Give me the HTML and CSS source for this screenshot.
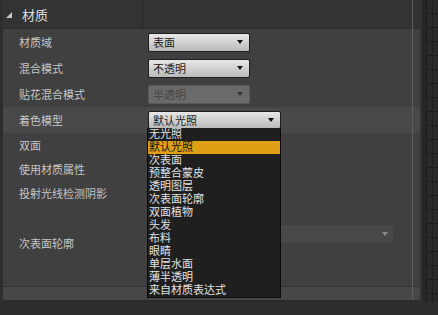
FILE: index.html
```html
<!DOCTYPE html>
<html lang="zh">
<head>
    <meta charset="UTF-8">
    <meta name="viewport" content="width=device-width, initial-scale=1.0">
    <title>材质</title>
    <link rel="stylesheet" href="styles.css">
</head>
<body>
<div class="editor">
    <div class="panel">
        <div class="header">
            <div class="header-title"><span class="expander"></span>材质</div>
            <div class="header-value"></div>
        </div>
        <div class="rows">
            <div class="row">
                <div class="label">材质域</div>
                <div class="value"><div class="combo">表面<span class="arrow"></span></div></div>
            </div>
            <div class="row">
                <div class="label">混合模式</div>
                <div class="value"><div class="combo">不透明<span class="arrow"></span></div></div>
            </div>
            <div class="row">
                <div class="label">贴花混合模式</div>
                <div class="value"><div class="combo disabled">半透明<span class="arrow"></span></div></div>
            </div>
            <div class="row selected">
                <div class="label">着色模型</div>
                <div class="value">
                    <div class="combo wide open">默认光照<span class="arrow"></span>
                        <ul class="menu">
                            <li>无光照</li>
                            <li class="active">默认光照</li>
                            <li>次表面</li>
                            <li>预整合蒙皮</li>
                            <li>透明图层</li>
                            <li>次表面轮廓</li>
                            <li>双面植物</li>
                            <li>头发</li>
                            <li>布料</li>
                            <li>眼睛</li>
                            <li>单层水面</li>
                            <li>薄半透明</li>
                            <li>来自材质表达式</li>
                        </ul>
                    </div>
                </div>
            </div>
            <div class="row short">
                <div class="label">双面</div>
                <div class="value"></div>
            </div>
            <div class="row short">
                <div class="label">使用材质属性</div>
                <div class="value"></div>
            </div>
            <div class="row short">
                <div class="label">投射光线检测阴影</div>
                <div class="value"></div>
            </div>
            <div class="row tall">
                <div class="label">次表面轮廓</div>
                <div class="value"><div class="asset-combo"><span class="arrow"></span></div></div>
            </div>
        </div>
        <div class="footer"></div>
    </div>
    <div class="side">
        <div class="side-gap"></div>
        <div class="side-bar"></div>
        <div class="side-grid"></div>
    </div>
</div>
</body>
</html>
```

FILE: styles.css
```css
body {
    margin: 0;
    width: 438px;
    height: 315px;
    overflow: hidden;
    background-color: #2e2e2e;
    font-family: "Liberation Sans", "Noto Sans CJK SC", sans-serif;
}
.editor {
    display: flex;
    height: 302px;
}
.panel {
    position: relative;
    margin-left: 3px;
    width: 417px;
    background-color: #404040;
    border-radius: 0 0 3px 3px;
}
/* thin scroll guide over the rows */
.panel::after {
    content: "";
    position: absolute;
    left: 409px;
    top: 0;
    bottom: 2px;
    width: 1px;
    background-color: #5e5e5e;
}
.header {
    display: flex;
    height: 28px;
    background-color: #333333;
    border-bottom: 1px solid #2d2d2d;
}
.header-title {
    display: flex;
    align-items: center;
    width: 140px;
    padding-left: 3px;
    box-sizing: border-box;
    border-right: 1px solid #262626;
    font-size: 13px;
    color: #dedede;
}
.expander {
    width: 0;
    height: 0;
    border-bottom: 6px solid #c8c8c8;
    border-left: 6px solid transparent;
    margin-right: 10px;
    margin-top: 2px;
}
.header-value {
    flex: 1;
}
.row {
    display: flex;
    align-items: center;
    height: 26px;
}
.row.short {
    height: 24px;
}
.row.tall {
    height: 76px;
}
.row.selected {
    background-color: #494949;
}
.label {
    width: 140px;
    padding-left: 16px;
    box-sizing: border-box;
    font-size: 11px;
    color: #c6c6c6;
}
.value {
    flex: 1;
    padding-left: 5px;
}
.row.tall .value {
    align-self: flex-start;
    padding-top: 20px;
}
.combo {
    position: relative;
    display: flex;
    align-items: center;
    justify-content: space-between;
    width: 102px;
    height: 19px;
    box-sizing: border-box;
    padding: 0 6px 0 4px;
    border: 1px solid #1e1e1e;
    border-radius: 2px;
    background: linear-gradient(#e8e8e8, #bababa);
    font-size: 11px;
    color: #1c1c1c;
}
.combo.wide {
    width: 133px;
    height: 18px;
}
.arrow {
    width: 0;
    height: 0;
    border-left: 3.5px solid transparent;
    border-right: 3.5px solid transparent;
    border-top: 4px solid #111111;
}
.combo.disabled {
    background: #6a6a6a;
    border-color: #585858;
    color: #464646;
}
.combo.disabled .arrow {
    border-top-color: #383838;
}
.menu {
    position: absolute;
    top: 100%;
    left: -2px;
    width: 134px;
    margin: 0;
    padding: 0;
    list-style: none;
    box-sizing: border-box;
    border: 1px solid #0a0a0a;
    border-top: none;
    background-color: #1f1f1f;
    z-index: 2;
}
.menu li {
    height: 13px;
    line-height: 13px;
    padding-left: 1px;
    font-size: 11px;
    color: #e2e2e2;
}
.menu li.active {
    background-color: #e0a016;
    color: #111111;
}
.asset-combo {
    display: flex;
    align-items: center;
    justify-content: flex-end;
    width: 245px;
    height: 18px;
    padding-right: 5px;
    box-sizing: border-box;
    border-radius: 2px;
    background-color: #484848;
}
.asset-combo .arrow {
    border-top-color: #8a8a8a;
}
.footer {
    margin-top: 5px;
    height: 13px;
    border-top: 1px solid #333333;
    border-bottom: 2px solid #2a2a2a;
    background-color: #474747;
    border-radius: 0 0 3px 3px;
}
.side {
    display: flex;
    flex: 1;
}
.side-gap {
    width: 2px;
    background-color: #333333;
}
.side-bar {
    width: 4px;
    background-color: #262626;
}
.side-grid {
    flex: 1;
    background-color: #2a2a2a;
    background-image:
        linear-gradient(90deg, transparent 5px, #1e1e1e 5px, #1e1e1e 6px, transparent 6px),
        repeating-linear-gradient(transparent 0, transparent 13px, #1c1c1c 13px, #1c1c1c 14px);
    border-left: 1px solid #1c1c1c;
}
```
